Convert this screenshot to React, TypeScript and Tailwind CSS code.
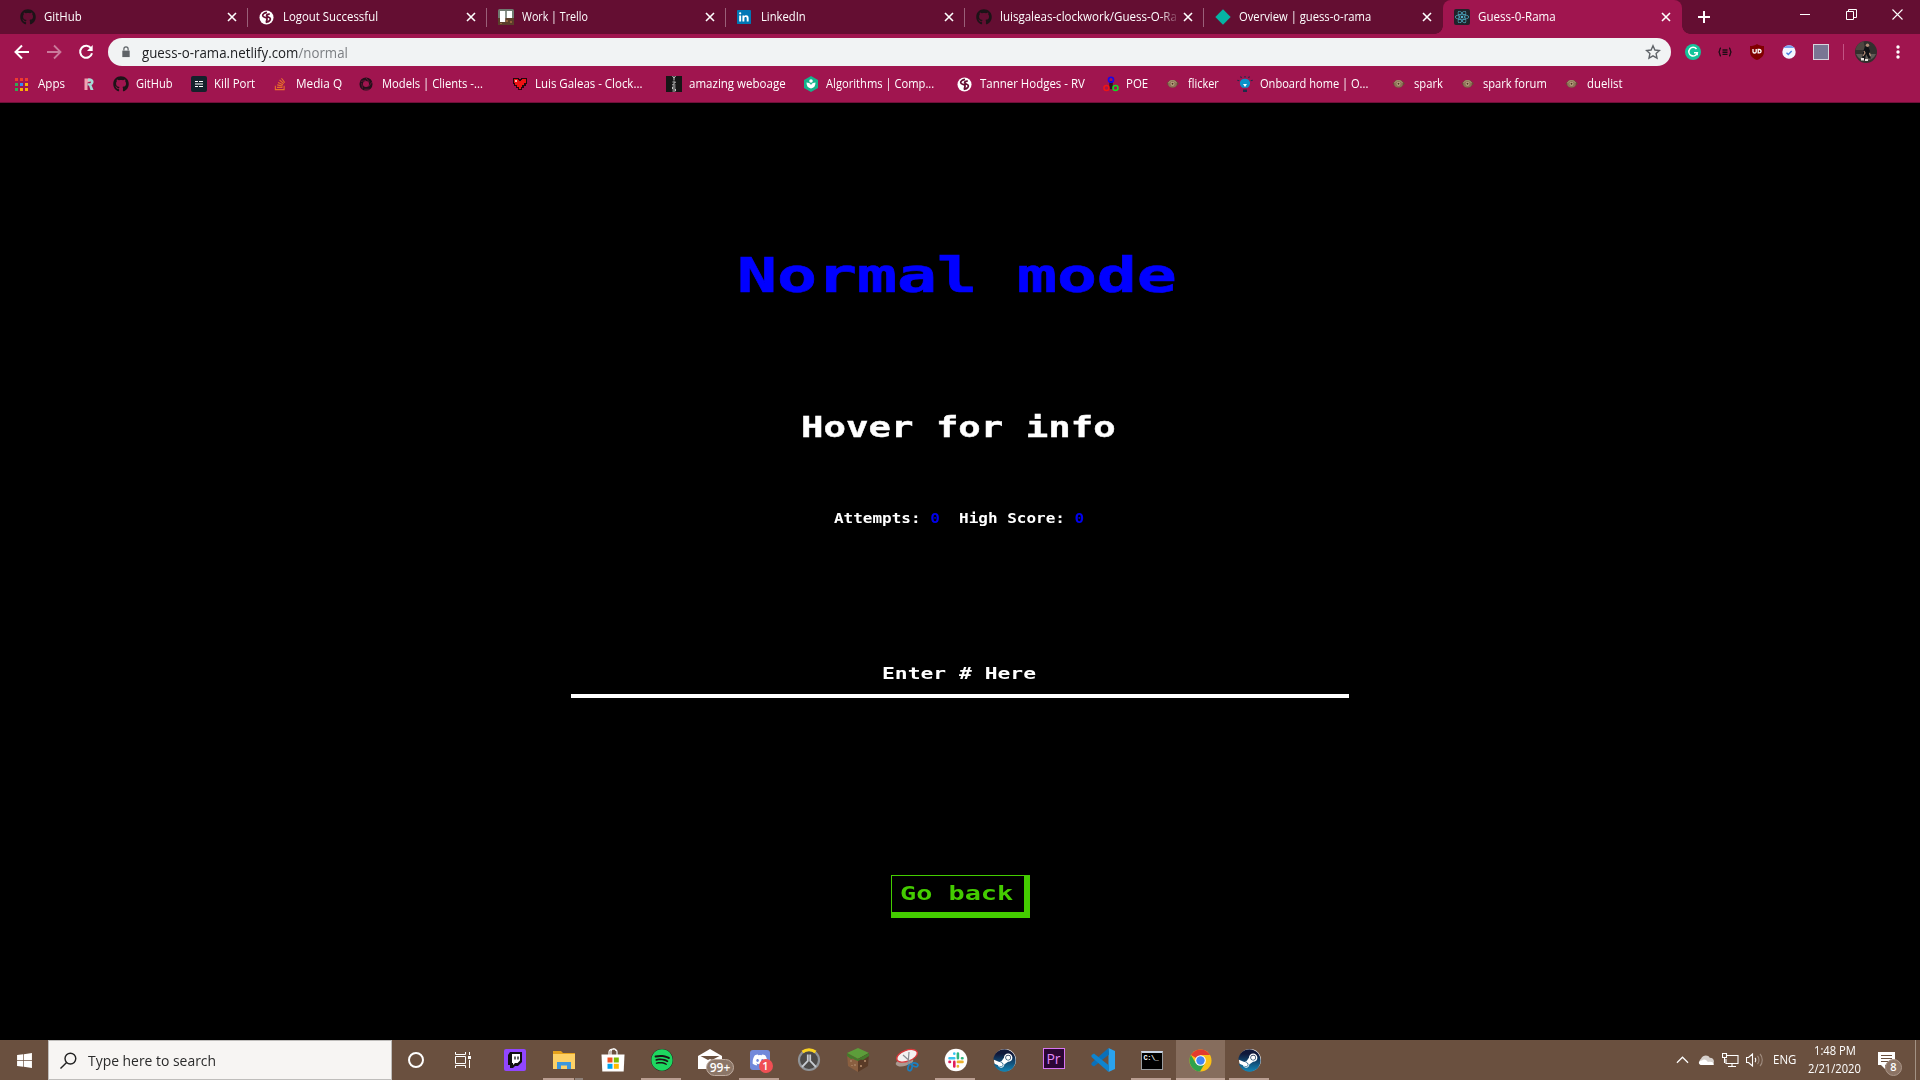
import React, { useLayoutEffect, useRef, useState } from "react";
import type { ReactNode } from "react";
import { FaGithub, FaSpotify, FaSteam, FaStackOverflow, FaWindows, FaReact, FaDiscord } from "react-icons/fa";

/* Single line of text stretched horizontally to a fixed width. */
function Fit({ w, className = "", children }: { w: number; className?: string; children: ReactNode }) {
  const ref = useRef<HTMLSpanElement>(null);
  const [scale, setScale] = useState(1);
  useLayoutEffect(() => {
    if (ref.current) setScale(w / ref.current.offsetWidth);
  }, [w]);
  return (
    <span className={"block shrink-0 whitespace-pre " + className} style={{ width: w }}>
      <span ref={ref} className="inline-block origin-left" style={{ transform: `scaleX(${scale})` }}>
        {children}
      </span>
    </span>
  );
}

function Globe() {
  return (
    <svg viewBox="0 0 16 16" className="size-[15px]">
      <circle cx="8" cy="8" r="7.500" fill="#fff" />
      <path d="M8.500 2.500C6 3 3.500 4.300 4 6.300S8 7.500 8.500 9s-1 3-.5 4c3-.5 4.500-2.500 4-4s-2.500-1-3.500-2.300S9 4.200 11.500 4.500" fill="none" stroke="#640e32" strokeWidth="1.900" />
    </svg>
  );
}

function Trello() {
  return (
    <svg viewBox="0 0 16 16" className="size-4">
      <rect width="16" height="16" rx="1.500" fill="#6f7a70" />
      <path d="M0 9h16v7H0z" fill="#5b3f2b" />
      <path d="M2 14h2v1H2zM8 11h2v2H8zM12 12h2v2h-2z" fill="#94643d" />
      <path d="M2 2h5.200v11H2zM8.800 2H14v7H8.800z" fill="#fff" />
    </svg>
  );
}

function LinkedIn() {
  return (
    <svg viewBox="0 0 16 16" className="size-[14px]">
      <rect width="16" height="16" rx="1" fill="#0077b5" />
      <path d="M2.500 6.200h2.200v7H2.500zM6.200 6.200h2.100v1c.9-1.600 5-1.800 5 2v4h-2.200V9.700c0-2.200-2.700-2-2.700 0v3.500H6.200z" fill="#fff" />
      <circle cx="3.600" cy="3.800" r="1.300" fill="#fff" />
    </svg>
  );
}

function Diamond() {
  return (
    <svg viewBox="0 0 16 16" className="size-4">
      <path d="M8 .3 15.700 8 8 15.700.3 8z" fill="#05b3a4" />
    </svg>
  );
}

function ReactBadge() {
  return (
    <span className="flex size-4 items-center justify-center rounded-[2px] bg-[#20232a]">
      <FaReact className="size-[14px] text-[#52b9d3]" />
    </span>
  );
}

function Eye() {
  return (
    <svg viewBox="0 0 16 16" className="size-4">
      <path d="M1.500 7.500 5 4h5l4 3.500-4 4H5z" fill="#6b4a38" />
      <ellipse cx="7.500" cy="7.700" rx="4.300" ry="3.800" fill="#8d7357" />
      <path d="M3.500 7a4.500 4.500 0 0 1 8 0" fill="none" stroke="#a99673" strokeWidth="1" />
      <circle cx="7.500" cy="7.800" r="1.900" fill="#c9b08e" />
      <circle cx="7.500" cy="7.800" r="1" fill="#4d3022" />
    </svg>
  );
}

function CloseIcon() {
  return (
    <svg viewBox="0 0 10 10" className="size-2.5" stroke="#fff" strokeWidth="1.600">
      <path d="m1 1 8 8M9 1 1 9" />
    </svg>
  );
}

const tabs: { title: string; w: number; icon: ReactNode; active?: boolean; fade?: boolean }[] = [
  { title: "GitHub", w: 38, icon: <FaGithub className="size-4 text-[#1c1317]" /> },
  { title: "Logout Successful", w: 95, icon: <Globe /> },
  { title: "Work | Trello", w: 66, icon: <Trello /> },
  { title: "LinkedIn", w: 45, icon: <LinkedIn /> },
  { title: "luisgaleas-clockwork/Guess-O-Ra", w: 177, icon: <FaGithub className="size-4 text-[#1c1317]" />, fade: true },
  { title: "Overview | guess-o-rama", w: 132, icon: <Diamond /> },
  { title: "Guess-0-Rama", w: 78, icon: <ReactBadge />, active: true },
];

function AppsIcon() {
  const colors = ["#f03a30", "#f03a30", "#f03a30", "#34a853", "#3b86f7", "#fbb005", "#34a853", "#fbb005", "#fbb005"];
  return (
    <span className="grid size-[13px] grid-cols-[3px_3px_3px] grid-rows-[3px_3px_3px] gap-[2px]">
      {colors.map((c, i) => (
        <span key={i} style={{ background: c }} />
      ))}
    </span>
  );
}

const bookmarks: { title: string; at: number; next: number; w: number; icon: ReactNode }[] = [
  { title: "Apps", at: 15, next: 81, w: 27, icon: <AppsIcon /> },
  {
    title: "", at: 81, next: 113, w: 0,
    icon: (
      <svg viewBox="0 0 16 16" className="size-4">
        <path d="M3.500 2.500h6v3l-3 1v7.500h-3z" fill="#f2a0b2" />
        <path d="M7 2.500h2c4.500 0 4.500 5.500 1.500 6.500l2 5H9.500L8 9.500H6.500V7.200H9c1.200 0 1.200-2 0-2H7z" fill="#a5dcd6" />
      </svg>
    ),
  },
  { title: "GitHub", at: 113, next: 191, w: 37, icon: <FaGithub className="size-4 text-[#1c1317]" /> },
  {
    title: "Kill Port", at: 191, next: 273, w: 41,
    icon: (
      <svg viewBox="0 0 16 16" className="size-4">
        <rect width="16" height="16" rx="2" fill="#14212b" />
        <path d="M4 5.500h3m1 0h4M4 8h8M4 10.500h3m1 0h4" stroke="#fff" strokeWidth="1.200" />
      </svg>
    ),
  },
  { title: "Media Q", at: 273, next: 359, w: 46, icon: <FaStackOverflow className="size-[14px] text-[#e8702a]" /> },
  {
    title: "Models | Clients -...", at: 359, next: 512, w: 101,
    icon: (
      <svg viewBox="0 0 16 16" className="size-[14px]">
        <circle cx="8" cy="8" r="5.500" fill="none" stroke="#22101a" strokeWidth="4" />
        <path d="m8 1 4 5M14.500 6 11 11M12 14H6M4 13 3 7M2 5l6-1" stroke="#8a1546" strokeWidth=".7" />
      </svg>
    ),
  },
  {
    title: "Luis Galeas - Clock...", at: 512, next: 666, w: 107,
    icon: (
      <svg viewBox="0 0 16 16" className="size-4" shapeRendering="crispEdges">
        <path d="M1 2h6v1h2V2h6v6h-1v2h-2v2h-2v2H6v-2H4v-2H2V8H1z" fill="#22060c" />
        <path d="M2 3h4v1h1v1h2V4h1V3h4v4h-2v2h-2v2H9v2H7v-2H5V9H3V7H2z" fill="#ee1212" />
        <path d="M3 4h2v2H3z" fill="#ffb3a8" />
      </svg>
    ),
  },
  {
    title: "amazing weboage", at: 666, next: 803, w: 97,
    icon: (
      <svg viewBox="0 0 16 16" className="size-4">
        <rect width="16" height="16" fill="#161616" />
        <path d="m6.500 0 1.500 2L9.500 0M8 2v2.500M6.500 6h3l-3 3h3M9.500 11h-3v2h3v2h-3" fill="none" stroke="#c9c9c9" strokeWidth="1" />
      </svg>
    ),
  },
  {
    title: "Algorithms | Comp...", at: 803, next: 957, w: 108,
    icon: (
      <svg viewBox="0 0 16 16" className="size-4">
        <path d="m8 0 7 4v8l-7 4-7-4V4z" fill="#14b38c" />
        <path d="M3.500 6.500c2 0 3.500.7 4.500 2.500 1-1.800 2.500-2.500 4.500-2.500C12.500 10 11 12 8 12.500 5 12 3.500 10 3.500 6.500z" fill="#fff" />
        <circle cx="8" cy="5" r="1.800" fill="#fff" />
      </svg>
    ),
  },
  { title: "Tanner Hodges - RV", at: 957, next: 1103, w: 105, icon: <Globe /> },
  {
    title: "POE", at: 1103, next: 1165, w: 22,
    icon: (
      <svg viewBox="0 0 16 16" className="size-4" fill="none" strokeWidth="1.600">
        <path d="M8 5v6M6 12l2-1 2 1" stroke="#2b1522" strokeWidth="3.500" />
        <circle cx="8" cy="3.800" r="2.500" stroke="#1606ee" />
        <circle cx="3.500" cy="12" r="2.500" stroke="#f01414" />
        <circle cx="12.500" cy="12" r="2.500" stroke="#11dd22" />
      </svg>
    ),
  },
  { title: "flicker", at: 1165, next: 1237, w: 31, icon: <Eye /> },
  {
    title: "Onboard home | O...", at: 1237, next: 1391, w: 108,
    icon: (
      <svg viewBox="0 0 16 16" className="size-4">
        <path d="M8 0v1.500M3.500.5l1 1.500M12.500.5l-1 1.500M.3 4.200l2 .6M15.700 4.200l-2 .6" stroke="#1d2c4a" strokeWidth="1.200" />
        <path d="M8 2.800c-6 0-6.500 6.500-2.500 9h5c4-2.500 3.500-9-2.500-9z" fill="#0b93c9" />
        <path d="M6 8h4l-2 3z" fill="#fff" />
        <path d="M6 13.500h4V16H6z" fill="#1d2c4a" />
      </svg>
    ),
  },
  { title: "spark", at: 1391, next: 1460, w: 29, icon: <Eye /> },
  { title: "spark forum", at: 1460, next: 1564, w: 64, icon: <Eye /> },
  { title: "duelist", at: 1564, next: 1640, w: 36, icon: <Eye /> },
];

function TabStrip() {
  return (
    <div className="flex h-[34px] bg-[#640e32]">
      <div className="flex w-[1686px] pl-[9px]">
        {tabs.map((t, i) => (
          <div
            key={t.title}
            className={
              "relative flex h-[34px] w-[239px] shrink-0 items-center pl-[11px] " +
              (t.active ? "rounded-t-lg bg-[#a0154f]" : "")
            }
          >
            <span className="flex w-6 shrink-0">{t.icon}</span>
            <Fit w={t.w} className={t.fade ? "[mask-image:linear-gradient(to_right,#000_160px,transparent_180px)]" : ""}>
              {t.title}
            </Fit>
            <span className="mr-[11px] ml-auto">
              <CloseIcon />
            </span>
            {i < 5 && <span className="absolute top-[8px] right-0 h-[19px] w-px bg-[#9a6079]" />}
            {t.active && (
              <>
                <span className="absolute bottom-0 -left-2 size-2 bg-[radial-gradient(circle_at_0_0,transparent_7.5px,#a0154f_8px)]" />
                <span className="absolute -right-2 bottom-0 size-2 bg-[radial-gradient(circle_at_100%_0,transparent_7.5px,#a0154f_8px)]" />
              </>
            )}
          </div>
        ))}
      </div>
      <svg viewBox="0 0 12 12" className="mt-[11px] ml-[12px] size-3" stroke="#fff" strokeWidth="2">
        <path d="M6 0v12M0 6h12" />
      </svg>
      <div className="mt-[9px] mr-[17px] ml-auto flex h-[11px] gap-[35px]">
        <svg viewBox="0 0 11 11" className="size-[11px]" stroke="#fff"><path d="M0 5.500h10" /></svg>
        <svg viewBox="0 0 11 11" className="size-[11px]" fill="none" stroke="#fff"><path d="M.5 2.500h7v8h-7zM2.500 2.500v-2h8v8h-3" /></svg>
        <svg viewBox="0 0 11 11" className="size-[11px]" stroke="#fff" strokeWidth="1.100"><path d="m.5.5 10 10M10.500.5l-10 10" /></svg>
      </div>
    </div>
  );
}

function Toolbar() {
  return (
    <div className="flex h-9 items-center pl-[14px]">
      <div className="flex w-[94px] gap-4">
        <svg viewBox="0 0 16 16" className="size-4" fill="none" stroke="#fff" strokeWidth="2"><path d="M15 8H2M8 1.500 1.500 8 8 14.500" /></svg>
        <svg viewBox="0 0 16 16" className="size-4" fill="none" stroke="#ca7a9b" strokeWidth="1.800"><path d="M1 8h13M8 1.500 14.500 8 8 14.500" /></svg>
        <svg viewBox="0 0 16 16" className="size-4" fill="none" stroke="#fff" strokeWidth="2"><path d="M13.200 4.500A6 6 0 1 0 14 9.200" /><path d="M14.700 1v6H9z" fill="#fff" stroke="none" /></svg>
      </div>
      <div className="flex h-7 w-[1563px] items-center rounded-full bg-[#f1f3f4] pl-[13px] text-[14px] text-[#202124]">
        <svg viewBox="0 0 10 13" className="mr-[11px] h-[12px] w-[10px]">
          <path d="M1 5h8v7H1z" fill="#5f6368" />
          <path d="M2.700 5V3.200a2.300 2.300 0 0 1 4.600 0V5" fill="none" stroke="#5f6368" strokeWidth="1.300" />
        </svg>
        <Fit w={206}>guess-o-rama.netlify.com<span className="text-[#7b7e82]">/normal</span></Fit>
        <svg viewBox="0 0 16 16" className="mr-[10px] ml-auto size-4" fill="none" stroke="#5f6368" strokeWidth="1.400">
          <path d="m8 1.800 1.900 4.200 4.600.5-3.400 3.100.9 4.500L8 11.800l-4 2.300.9-4.500L1.500 6.500l4.600-.5z" />
        </svg>
      </div>
      <div className="flex items-center pl-[14px]">
        <svg viewBox="0 0 16 16" className="mr-4 size-4">
          <circle cx="8" cy="8" r="8" fill="#15c39a" />
          <path d="M11.500 5a4.300 4.300 0 1 0 .8 3.700H9M12.200 8.700v2.500" fill="none" stroke="#fff" strokeWidth="1.500" />
        </svg>
        <svg viewBox="0 0 16 16" className="mr-4 size-4" fill="none" stroke="#1d0d15" strokeWidth="1.400">
          <path d="M4 4C2 4 3.500 8 1.500 8 3.500 8 2 12 4 12M12 4c2 0 .5 4 2.500 4-2 0-.5 4-2.500 4M5.500 6h5M5.500 8.200h5M5.500 10.400h5" />
        </svg>
        <svg viewBox="0 0 16 16" className="mr-4 size-4">
          <path d="M8 0c2 1.500 4.500 2 7 2v6c0 4-3 6.500-7 8-4-1.500-7-4-7-8V2c2.500 0 5-.5 7-2z" fill="#800000" />
          <path d="M4 5v2.700c0 1.700 3.200 1.700 3.200 0V5M9.200 5.500v3.300h1c2.500 0 2.500-3.300 0-3.300z" fill="none" stroke="#fff" strokeWidth="1.300" />
        </svg>
        <svg viewBox="0 0 16 16" className="mr-4 size-4">
          <circle cx="8" cy="8" r="6.700" fill="#f3f6ff" />
          <path d="M2.500 4a6.700 6.700 0 0 1 11 0z" fill="#7aa1ee" />
          <path d="m5.500 8.700 1.800 1.800L10.700 7" fill="none" stroke="#4a7ee0" strokeWidth="1.400" />
        </svg>
        <span className="mr-[14px] size-4 border border-[#d8d3dc] bg-[#7a7593]" />
        <span className="mr-[11px] h-4 w-px bg-[#c25484]" />
        <svg viewBox="0 0 22 22" className="size-[22px]">
          <circle cx="11" cy="11" r="11" fill="#33302e" />
          <path d="M.5 9a11 11 0 0 1 8-8.700L10 9z" fill="#4d4640" />
          <path d="M1 13h20a11 11 0 0 1-20 0z" fill="#5d5a55" />
          <path d="m10 5.500 3-.5 2 5-1 2 2 5.500h-2.500L11 13l-1 6H7l1-8z" fill="#101216" />
          <circle cx="12.500" cy="4.300" r="1.700" fill="#b48e77" />
          <path d="m9 10 1 2-2 3M14.500 12l1 3" fill="none" stroke="#b48e77" strokeWidth="1.200" />
          <path d="M6 17h3v2.500H6zM10 18h3v2h-3z" fill="#e8e4df" />
        </svg>
        <svg viewBox="0 0 4 14" className="ml-[19px] h-[14px] w-1" fill="#fff"><circle cx="2" cy="2" r="1.700" /><circle cx="2" cy="7" r="1.700" /><circle cx="2" cy="12" r="1.700" /></svg>
      </div>
    </div>
  );
}

function Bookmarks() {
  return (
    <div className="flex h-[33px] items-center border-b border-[#6f1039] pb-[4px] pl-[15px]">
      {bookmarks.map((b) => (
        <div key={b.at} className="flex shrink-0 items-center" style={{ width: b.next - b.at }}>
          <span className="flex w-[23px] shrink-0">{b.icon}</span>
          {b.title && <Fit w={b.w}>{b.title}</Fit>}
        </div>
      ))}
    </div>
  );
}

function Game() {
  return (
    <main className="flex h-[937px] flex-col items-center bg-black font-['DejaVu_Sans_Mono',monospace] font-bold text-white">
      <h1 className="mt-[144px] mr-[7px] h-[56px] text-[48px] leading-[56px] text-[#0000ff] [-webkit-text-stroke:0.6px]">
        <Fit w={440}>Normal mode</Fit>
      </h1>
      <h2 className="mt-[108px] mr-[3px] h-[32px] text-[27.5px] leading-[32px] [-webkit-text-stroke:0.4px]">
        <Fit w={315}>Hover for info</Fit>
      </h2>
      <p className="mt-[65px] mr-[3px] flex h-5 text-[14px] leading-5">
        <Fit w={250}>Attempts: <span className="text-[#0000ee]">0</span>{"  "}High Score: <span className="text-[#0000ee]">0</span></Fit>
      </p>
      <div className="mt-[136px] flex h-[34px] w-[778px] justify-center border-b-4 border-white pr-[3px] text-[15.5px] leading-5">
        <Fit w={154}>Enter # Here</Fit>
      </div>
      <button className="mt-[177px] flex h-[43px] w-[139px] border border-r-[6px] border-b-[6px] border-[#44cc00] pt-[5px] pl-2 text-left text-[19px] leading-6 text-[#44cc00]">
        <Fit w={113}>Go back</Fit>
      </button>
    </main>
  );
}

function Steam() {
  return (
    <span className="flex size-[22px] items-center justify-center rounded-full bg-white">
      <svg width="0" height="0" className="absolute">
        <linearGradient id="steam" x1="0" y1="0" x2="0" y2="1"><stop offset="0.200" stopColor="#10183a" /><stop offset="1" stopColor="#1387b8" /></linearGradient>
      </svg>
      <FaSteam className="size-[23px] shrink-0 fill-[url(#steam)]" />
    </span>
  );
}

const taskIcons: { icon: ReactNode; state?: "open" | "multi" | "active" }[] = [
  { icon: <span className="flex size-[22px] items-center justify-center rounded-[2px] bg-[#9146ff]"><svg viewBox="0 0 16 16" className="size-4"><path d="M3 0h12v10l-4 4H8l-2 2H3v-3H1V3z" fill="#111" /><path d="M5 2h8v6.500l-2.500 2.500H8l-2 2v-2H5z" fill="#fff" /><path d="M8 4.500v3M11 4.500v3" stroke="#111" strokeWidth="1.300" /></svg></span> },
  {
    state: "multi",
    icon: (
      <svg viewBox="0 0 24 22" className="h-[22px] w-6">
        <path d="M1 2h8l2 2h12v5H1z" fill="#e6a21c" /><path d="M1 5h22v15H1z" fill="#fdd166" />
        <path d="M5 20v-7h14v7h-4v-3.500H9V20z" fill="#3c97dc" />
      </svg>
    ),
  },
  {
    icon: (
      <svg viewBox="0 0 24 24" className="size-6">
        <path d="M8 7V4c0-4 8-4 8 0v3M10 7V3c1-3 5-3 5 0" fill="none" stroke="#fff" strokeWidth="1.200" />
        <path d="M.5 6.500h23l-.8 17H1.300z" fill="#fff" />
        <path d="M6.500 9.500h5v5h-5z" fill="#f25022" /><path d="M12.800 9.500h5v5h-5z" fill="#7fba00" /><path d="M6.500 15.800h5v5h-5z" fill="#00a4ef" /><path d="M12.800 15.800h5v5h-5z" fill="#ffb900" />
      </svg>
    ),
  },
  { state: "open", icon: <span className="flex rounded-full bg-[#191414]"><FaSpotify className="size-[22px] text-[#1ed760]" /></span> },
  {
    icon: (
      <span className="relative flex">
        <svg viewBox="0 0 24 22" className="-ml-px h-[22px] w-6"><path d="M0 7 12 0l12 7v13H0z" fill="#fff" /><path d="M2.500 7h19L14 11l-2-1-2 1z" fill="#6b5140" /></svg>
        <span className="absolute top-[10px] left-[7px] flex h-[17px] w-7 items-center justify-center rounded-full border border-[#c0aca0] bg-[#8b7667] text-[12px] font-semibold">99+</span>
      </span>
    ),
  },
  {
    state: "open",
    icon: (
      <span className="relative flex size-5 items-center justify-center rounded-[3px] bg-[#7289da]">
        <FaDiscord className="size-4 text-white" />
        <span className="absolute top-[9px] left-[9px] flex size-[14px] items-center justify-center rounded-full bg-[#f04f54] text-[11px] font-semibold">1</span>
      </span>
    ),
  },
  {
    icon: (
      <svg viewBox="0 0 24 24" className="size-6" fill="none">
        <circle cx="12" cy="12" r="10" fill="#4c4a48" stroke="#8f9397" strokeWidth="2.200" />
        <path d="M5.500 4a10.300 10.300 0 0 1 13 0" stroke="#fbd321" strokeWidth="3" />
        <path d="m5 19 5.800-6V6.500M19 19l-5.800-6V6.500" stroke="#c6cbd0" strokeWidth="1.800" />
      </svg>
    ),
  },
  {
    icon: (
      <svg viewBox="0 0 24 24" className="size-6">
        <path d="m12 0 11 5-11 6L1 5z" fill="#5c9d3a" /><path d="m1 5 11 6v13L2 18z" fill="#8a5f40" /><path d="m23 5-11 6v13l10-6z" fill="#5a3b27" />
        <path d="m1 5 11 6v2l-3-1-2-1.500L5 11 1 8zM23 5l-11 6v2l3-1.500 2 .5 6-4z" fill="#447a2b" />
        <path d="M4 12h2v2H4zM8 16h2v2H8zM14 17h2v2h-2zM18 12h2v2h-2zM5 17h2v1H5z" fill="#a17a5b" />
      </svg>
    ),
  },
  {
    icon: (
      <svg viewBox="0 0 24 24" className="size-6">
        <ellipse cx="9.500" cy="14" rx="9" ry="4" fill="#a99a91" transform="rotate(-15 9.500 14)" />
        <ellipse cx="12" cy="7.800" rx="10.800" ry="5.500" fill="#f4f2f1" stroke="#d9393b" strokeWidth="1.300" transform="rotate(-20 12 7.800)" />
        <path d="m8 7 10 9M14 4l-1 13" stroke="#8d8d92" strokeWidth="1.200" />
        <ellipse cx="15" cy="19.500" rx="2" ry="3.300" fill="none" stroke="#1c7fc0" strokeWidth="1.700" transform="rotate(15 15 19.500)" /><ellipse cx="20" cy="16.800" rx="3" ry="1.800" fill="none" stroke="#1c7fc0" strokeWidth="1.700" transform="rotate(15 20 16.800)" />
      </svg>
    ),
  },
  {
    state: "open",
    icon: (
      <svg viewBox="0 0 24 24" className="size-6" strokeWidth="2.600" strokeLinecap="round">
        <circle cx="12" cy="12" r="11.300" fill="#fff" />
        <path d="M10.300 5.500v.3M5.500 10.200h4.800" stroke="#36c5f0" /><path d="M13.900 5.500v4.700M18.500 10.200h-.5" stroke="#2eb67d" />
        <path d="M18.500 13.900h-4.600M13.900 18v.5" stroke="#ecb22e" /><path d="M10.300 18.500v-4.600M5.500 13.900h.5" stroke="#e01e5a" />
      </svg>
    ),
  },
  { icon: <Steam /> },
  { icon: <span className="mt-[-3px] flex h-[21px] w-[22px] items-center justify-center border border-[#d974f3] bg-[#2a0634] text-[14px] leading-none text-[#e389fa]">Pr</span> },
  {
    icon: (
      <svg viewBox="0 0 24 24" className="size-6">
        <path d="M17.500 0 24 3v18l-6.500 3z" fill="#2aa3ee" />
        <path d="m17.500 0 .5 6.500L3 18.500.5 17v-2z" fill="#0a70ba" />
        <path d="m17.500 24 .5-6.500L3 5.500.5 7v2z" fill="#0d84d0" />
      </svg>
    ),
  },
  {
    state: "open",
    icon: (
      <span className="flex h-[19px] w-[22px] flex-col border border-t-2 border-[#9a9da0] border-t-[#c9d4e5] bg-black pt-[2px] pl-[2px] font-['Liberation_Mono',monospace] text-[7px] leading-[7px] font-bold tracking-[-0.5px]">C:\_</span>
    ),
  },
  {
    state: "active",
    icon: (
      <svg viewBox="0 0 24 24" className="size-[23px]">
        <circle cx="12" cy="12" r="11.500" fill="#fbc116" />
        <path d="M12 12 2 6.300A11.500 11.500 0 0 1 22 6.300H12z" fill="#e33b2e" />
        <path d="M2 6.300A11.500 11.500 0 0 0 11.500 23.500l5-8.500L7 14.500z" fill="#2fa24c" />
        <circle cx="12" cy="12" r="5.600" fill="#fff" /><circle cx="12" cy="12" r="4.400" fill="#4285f4" />
      </svg>
    ),
  },
  { state: "open", icon: <Steam /> },
];

function Taskbar() {
  return (
    <footer className="flex h-10 items-center bg-[#6a503f]">
      <div className="flex w-12 justify-center">
        <FaWindows className="size-[17px]" />
      </div>
      <div className="flex h-10 w-[344px] items-center border border-[#bfbdbb] bg-[#f7f5f3] pl-[11px] text-[15px] text-[#2b2b2b]">
        <svg viewBox="0 0 18 18" className="mr-[11px] size-[17px]" fill="none" stroke="#222" strokeWidth="1.500"><circle cx="11" cy="7" r="5.700" /><path d="m7 11-6.500 6.500" /></svg>
        <Fit w={128}>Type here to search</Fit>
      </div>
      <div className="flex w-[47px] justify-center"><span className="size-4 rounded-full border-2 border-white" /></div>
      <div className="flex w-12 justify-center">
        <svg viewBox="0 0 16 16" className="size-4" fill="none" stroke="#fff"><path d="M.5 0v2.500h10V0M.5 16v-2.500h10V16M.5 4.500h10v7H.5zM14.500 0v3M14.500 8v8" /><path d="M13 4h3v3h-3z" fill="#fff" stroke="none" /></svg>
      </div>
      <div className="flex pl-[3px]">
        {taskIcons.map((t, i) => (
          <div key={i} className={"relative flex h-10 w-[49px] items-center justify-center " + (t.state === "active" ? "bg-[#866d5d]" : "")}>
            {t.icon}
            {t.state && (
              <span className={"absolute bottom-0 flex h-[2px] " + (t.state === "active" ? "inset-x-0 bg-[#c0a598]" : "right-[5px] left-1 bg-[#b99e91]")}>
                {t.state === "multi" && <span className="ml-auto w-[9px] border-l border-[#6a503f] bg-[#8f8179]" />}
              </span>
            )}
          </div>
        ))}
      </div>
      <div className="ml-auto flex h-10 items-center">
        <svg viewBox="0 0 14 8" className="h-[8px] w-[13px]" fill="none" stroke="#fff" strokeWidth="1.300"><path d="m1 7 6-6 6 6" /></svg>
        <svg viewBox="0 0 18 12" className="ml-[9px] h-[11px] w-[17px]"><path d="M4 11a4 4 0 0 1-1-7c2-4.500 8-4.500 9.500-1 3.500 0 5 2.500 4.500 5s-2 3-3 3z" fill="#d6d0cc" /><path d="M3 11C-.5 10 0 6 4 6c3-2.500 5 0 6.500 1.500C14 7 17 7 17 11z" fill="#fff" /></svg>
        <svg viewBox="0 0 17 14" className="ml-[7px] h-[14px] w-[17px]" fill="none" stroke="#fff" strokeWidth="1.100"><path d="M5 2.500h11v8H4V6M10 10.500v3M6 13.500h8M.5.5h4v4h-4zM2.500 4.500V10" /></svg>
        <svg viewBox="0 0 17 14" className="ml-[7px] h-[14px] w-[17px]" fill="none" stroke="#fff" strokeWidth="1.100"><path d="M.5 4.500h2L6.500 1v12l-4-3.500h-2zM9 5c1 1 1 3 0 4" /><path d="M11.500 3c2 2 2 6 0 8M14 1c3 3 3 9 0 12" stroke="#a08d80" /></svg>
        <Fit w={23} className="ml-[10px]">ENG</Fit>
        <div className="ml-[12px] flex w-[53px] flex-col items-center leading-[18px]">
          <Fit w={42}>1:48 PM</Fit>
          <Fit w={53}>2/21/2020</Fit>
        </div>
        <span className="relative ml-[17px] flex w-[37px]">
          <svg viewBox="0 0 17 17" className="size-[17px]"><path d="M0 0h17v13H7v4l-4-4H0z" fill="#fff" /><path d="M3 3.500h11M3 6.500h11M3 9.500h7" stroke="#6a503f" strokeWidth="1.200" /></svg>
          <span className="absolute top-[7px] left-[7px] flex size-[17px] items-center justify-center rounded-full border border-[#ac978a] bg-[#8b7364] text-[11px] font-semibold">8</span>
        </span>
        <span className="mr-1 h-10 w-px bg-[#a39284]" />
      </div>
    </footer>
  );
}

export default function App() {
  return (
    <div className="flex h-[1080px] w-[1920px] flex-col overflow-hidden bg-black font-['Open_Sans','Noto_Sans',sans-serif] text-[12px] text-white">
      <header className="h-[103px] shrink-0 bg-[#a0154f]">
        <TabStrip />
        <Toolbar />
        <Bookmarks />
      </header>
      <Game />
      <Taskbar />
    </div>
  );
}
